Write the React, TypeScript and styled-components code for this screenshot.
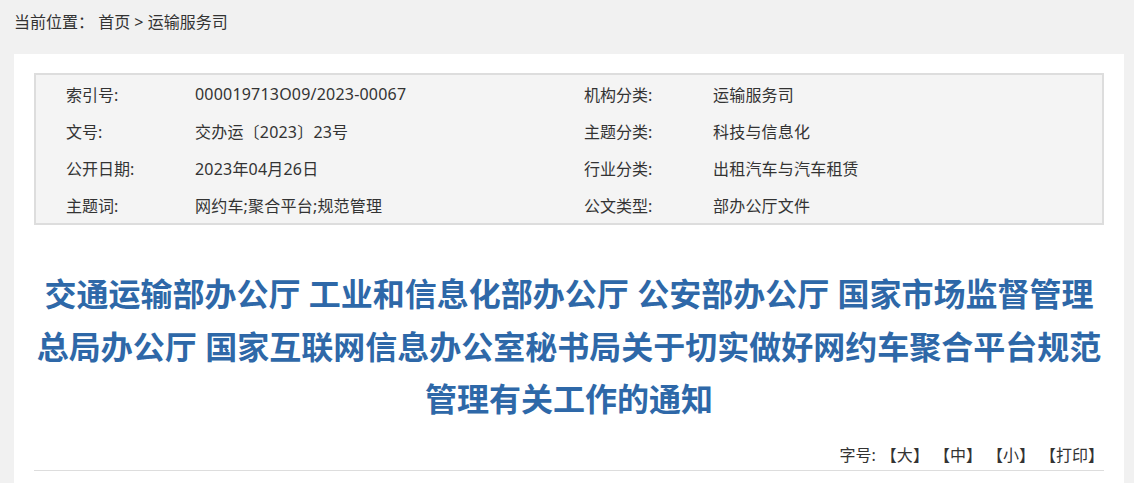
import React from 'react';
import styled, { createGlobalStyle } from 'styled-components';

const GlobalStyle = createGlobalStyle`
  body {
    margin: 0;
    background: #f1f1f1;
    font-family: "Noto Sans", "Noto Sans CJK SC", sans-serif;
    color: #333;
  }
`;

interface InfoItem {
  label: string;
  value: string;
}

const infoRows: [InfoItem, InfoItem][] = [
  [
    { label: '索引号:', value: '000019713O09/2023-00067' },
    { label: '机构分类:', value: '运输服务司' },
  ],
  [
    { label: '文号:', value: '交办运〔2023〕23号' },
    { label: '主题分类:', value: '科技与信息化' },
  ],
  [
    { label: '公开日期:', value: '2023年04月26日' },
    { label: '行业分类:', value: '出租汽车与汽车租赁' },
  ],
  [
    { label: '主题词:', value: '网约车;聚合平台;规范管理' },
    { label: '公文类型:', value: '部办公厅文件' },
  ],
];

const fontSizes = ['大', '中', '小'];

const App: React.FC = () => {
  return (
    <Page>
      <GlobalStyle />
      <Breadcrumb>
        当前位置：&nbsp;<Crumb>首页</Crumb> &gt; <Crumb>运输服务司</Crumb>
      </Breadcrumb>
      <Card>
        <InfoBox>
          {infoRows.map((row, i) => (
            <InfoRow key={i}>
              {row.map((item) => (
                <React.Fragment key={item.label}>
                  <Label>{item.label}</Label>
                  <Value>{item.value}</Value>
                </React.Fragment>
              ))}
            </InfoRow>
          ))}
        </InfoBox>
        <Title>
          交通运输部办公厅 工业和信息化部办公厅 公安部办公厅 国家市场监督管理总局办公厅 国家互联网信息办公室秘书局关于切实做好网约车聚合平台规范管理有关工作的通知
        </Title>
        <Tools>
          <span>字号:</span>
          {fontSizes.map((s) => (
            <ToolLink key={s}>【{s}】</ToolLink>
          ))}
          <ToolLink>【打印】</ToolLink>
        </Tools>
      </Card>
    </Page>
  );
};

const Page = styled.div`
  padding: 0 10px 0 14px;
  min-height: 483px;
`;

const Breadcrumb = styled.div`
  height: 54px;
  line-height: 44px;
  font-size: 16px;
  color: #333;
`;

const Crumb = styled.a`
  color: #333;
  text-decoration: none;
  cursor: pointer;
`;

const Card = styled.div`
  background: #fff;
  padding: 19px 20px 40px;
`;

const InfoBox = styled.div`
  background: #f4f4f4;
  border: 2px solid #dddddd;
`;

const InfoRow = styled.div`
  display: grid;
  grid-template-columns: 129px 389px 129px 1fr;
  padding-left: 30px;
  height: 37px;
  align-items: center;
  font-size: 16px;
  color: #333;
`;

const Label = styled.div`
  white-space: nowrap;
`;

const Value = styled.div`
  white-space: nowrap;
  letter-spacing: 0.2px;
`;

const Title = styled.h1`
  margin: 43px 0 0;
  text-align: center;
  font-size: 32px;
  line-height: 52.5px;
  font-weight: 700;
  color: #2e68a8;
`;

const Tools = styled.div`
  margin-top: 12px;
  display: flex;
  justify-content: flex-end;
  align-items: center;
  gap: 5px;
  height: 32px;
  padding-right: 0;
  border-bottom: 1px solid #dddddd;
  font-size: 16px;
  color: #333;
`;

const ToolLink = styled.a`
  color: #333;
  cursor: pointer;
`;

export default App;
